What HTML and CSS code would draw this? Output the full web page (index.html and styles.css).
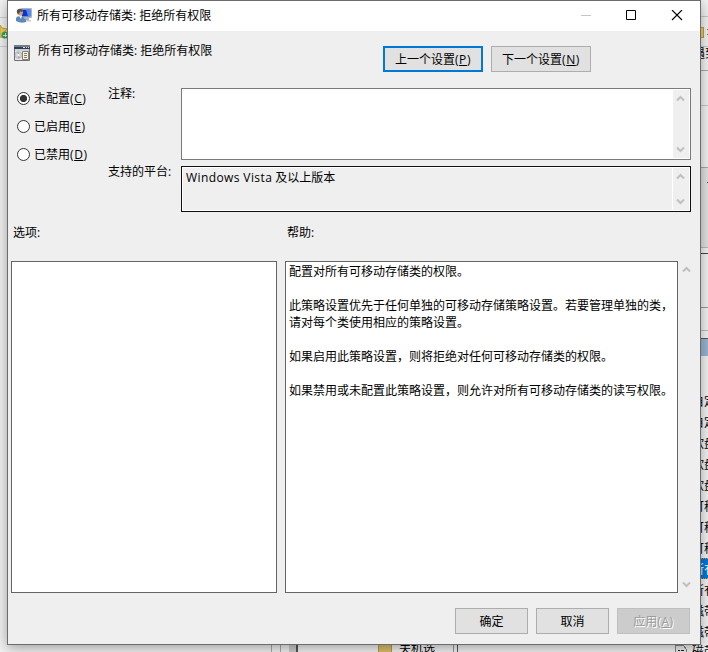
FILE: index.html
```html
<!DOCTYPE html>
<html lang="zh-CN">
<head>
<meta charset="utf-8">
<title>所有可移动存储类: 拒绝所有权限</title>
<link rel="stylesheet" href="styles.css">
</head>
<body>
<div class="desktop">
  <svg class="backdrop" width="708" height="652" viewBox="0 0 708 652" shape-rendering="crispEdges">
    <path d="M0 17.500H8M0 46.500H8" stroke="#cfcfcf"/>
    <path d="M0 25l2 3 5 1-3 4 1 5-5-1z" fill="#f0cf58" stroke="#c9a12a" shape-rendering="auto"/>
    <circle cx="5" cy="35" r="3.500" fill="#36a35a" shape-rendering="auto"/>
    <path d="M3 35h4M5 33v4" stroke="#d8f0dd"/>
    <path d="M701 16.500h7M701 46.500h7M701 105.500h7" stroke="#c6c6c6"/>
    <path d="M697.500 27.500h6v10h-6z" fill="#e2cf7c" stroke="#c99e1e"/>
    <path d="M707 29h1M707 34h1" stroke="#b06030"/>
    <path d="M701 70.500h7M701 167.500h7" stroke="#a8a8a8"/>
    <path d="M701 168h7v79h-7z" fill="#e2e2e2"/>
    <path d="M707 182.500h1M701 253.500h7" stroke="#444"/>
    <path d="M701 247.500h7M701 330.500h7" stroke="#bbb"/>
    <path d="M701 307.500h7" stroke="#999"/>
    <path d="M701 338.500h7" stroke="#555"/>
    <path d="M701 339h7v17h-7z" fill="#99b4d1"/>
    <path d="M701 558h7v21h-7z" fill="#0078d7"/>
    <path d="M701 558.500h7M701 578.500h7" stroke="#e08a3a" stroke-dasharray="1 1"/>
    <path d="M271.500 645v7M280.500 645v7" stroke="#aaa"/>
    <path d="M289 645h7v7h-7z" fill="#ccc"/>
    <path d="M297 645v7" stroke="#555" stroke-width="2"/>
    <path d="M378.500 644.500h13v9h-13z" fill="#dcbd6a" stroke="#b99743"/>
    <path d="M453.500 645v7" stroke="#8b96aa"/>
    <path d="M457.500 645v7" stroke="#555"/>
    <path d="M675.500 645.500h8l3 4v4h-11z" fill="#eee" stroke="#888"/>
    <path d="M678 650.500h2M681 650.500h3" stroke="#222"/>
  </svg>
  <span class="scrap scrap-menu">遇到</span>
  <span class="scrap scrap-tree">关机选</span>
  <span class="scrap scrap-tape">磁带</span>
  <div class="policy-list">
    <span>自定</span><span>自定</span><span>软盘</span><span>软盘</span><span>软盘</span><span>可移</span><span>可移</span><span>可移</span><span class="selected">所有</span><span>所有</span><span>磁带</span><span>磁带</span>
  </div>

  <main class="dialog">
    <header class="titlebar">
      <svg class="app-icon" width="16" height="16" viewBox="0 0 16 16">
        <path d="M5 .5h10.500v9H5z" fill="#d9dde2" stroke="#aeb5bd"/>
        <path d="M6 1.500h8.500v7H6z" fill="#0b35c8"/>
        <path d="M10 1.500h4.500v7H12z" fill="#5289ed"/>
        <path d="M9 10h4v2H9z" fill="#a9b0ba"/><path d="M8 12h7v1.500H8z" fill="#c5cad1"/>
        <circle cx="4" cy="4.500" r="3" fill="#d2a078"/>
        <path d="M1 5Q0 1 4 .8 7 1 6.500 4L4 3.500 3 6z" fill="#55504b"/>
        <path d="M0 13V10Q1 8 4 8t6 4v2Q5 16 0 13" fill="#5e89bb"/>
        <path d="M3 8l2 3 1-3" fill="#e9f0f7"/>
      </svg>
      <h1>所有可移动存储类: 拒绝所有权限</h1>
      <svg class="controls" width="104" height="12" viewBox="0 0 104 12">
        <path d="M1 5.500h10" stroke="#c6c6c6"/>
        <path d="M46.500 .5h9v9h-9z" fill="none" stroke="#000"/>
        <path d="M92 0l10 10M102 0L92 10" stroke="#000" stroke-width="1.100"/>
      </svg>
    </header>

    <section class="heading">
      <svg class="policy-icon" width="16" height="16" viewBox="0 0 16 16">
        <path d="M.5.500h15v15H.5z" fill="#ece9e4" stroke="#716f73"/>
        <path d="M0 0h16v2H0z" fill="#777b83"/><path d="M0 2h16v2H0z" fill="#29415f"/>
        <path d="M9 2h2v1H9zM12 2h1v1h-1zM14 2h1v1h-1z" fill="#dfe5e9"/>
        <path d="M1 4h14v2H1z" fill="#cfd2d4"/>
        <circle cx="4.500" cy="10" r="3.500" fill="#d7cfe0" stroke="#a8a1b2" stroke-width=".6"/>
        <path d="M4.500 10L3 7h2zM4.500 10L6 13H4z" fill="#85bc9a"/>
        <circle cx="4.500" cy="10" r="1" fill="#fff"/>
        <path d="M8.500 6.500h6v8h-6z" fill="#f7f3de" stroke="#88826f"/>
        <path d="M10 8.500h3M10 10.500h3M10 12.500h3" stroke="#817f79"/>
      </svg>
      <h2>所有可移动存储类: 拒绝所有权限</h2>
      <div class="nav-buttons">
        <button class="btn primary">上一个设置<span class="key">(<u>P</u>)</span></button>
        <button class="btn">下一个设置<span class="key">(<u>N</u>)</span></button>
      </div>
    </section>

    <section class="state">
      <div class="radios">
        <label><i class="radio checked"></i><span>未配置<span class="key">(<u>C</u>)</span></span></label>
        <label><i class="radio"></i><span>已启用<span class="key">(<u>E</u>)</span></span></label>
        <label><i class="radio"></i><span>已禁用<span class="key">(<u>D</u>)</span></span></label>
      </div>
      <div class="fields">
        <span class="field-label">注释:</span>
        <div class="box comment">
          <div class="box-text"></div>
          <div class="scroll">
            <svg width="9" height="7" viewBox="0 0 9 7"><path d="M1 5.500L4.500 2 8 5.500"/></svg>
            <svg width="9" height="7" viewBox="0 0 9 7"><path d="M1 1.500L4.500 5 8 1.500"/></svg>
          </div>
        </div>
        <span class="field-label">支持的平台:</span>
        <div class="box platform">
          <div class="box-text"><span class="latin">Windows Vista</span> 及以上版本</div>
          <div class="scroll">
            <svg width="9" height="7" viewBox="0 0 9 7"><path d="M1 5.500L4.500 2 8 5.500"/></svg>
            <svg width="9" height="7" viewBox="0 0 9 7"><path d="M1 1.500L4.500 5 8 1.500"/></svg>
          </div>
        </div>
      </div>
    </section>

    <section class="details">
      <span class="options-label">选项:</span>
      <span class="help-label">帮助:</span>
      <div class="panel"></div>
      <div class="panel help">
        <p>配置对所有可移动存储类的权限。</p>
        <p>此策略设置优先于任何单独的可移动存储策略设置。若要管理单独的类，<br>请对每个类使用相应的策略设置。</p>
        <p>如果启用此策略设置，则将拒绝对任何可移动存储类的权限。</p>
        <p>如果禁用或未配置此策略设置，则允许对所有可移动存储类的读写权限。</p>
      </div>
      <div class="scroll">
        <svg width="9" height="7" viewBox="0 0 9 7"><path d="M1 5.500L4.500 2 8 5.500"/></svg>
        <svg width="9" height="7" viewBox="0 0 9 7"><path d="M1 1.500L4.500 5 8 1.500"/></svg>
      </div>
    </section>

    <footer class="actions">
      <button class="btn">确定</button>
      <button class="btn">取消</button>
      <button class="btn" disabled>应用<span class="key">(<u>A</u>)</span></button>
    </footer>
  </main>
</div>
</body>
</html>
```

FILE: styles.css
```css
* { box-sizing: border-box; }
body {
  margin: 0;
  font: 12px/17px "Open Sans", "Noto Sans CJK SC", sans-serif;
  color: #000;
}
h1, h2, p { margin: 0; font-size: 12px; font-weight: 400; }
u { text-decoration-thickness: 1px; text-underline-offset: 1px; }
.key { letter-spacing: .6px; }
.latin { letter-spacing: .4px; }

.desktop {
  position: relative;
  width: 708px;
  height: 652px;
  overflow: hidden;
  background: #f2f2f2;
}
.backdrop { position: absolute; inset: 0; }
.scrap { position: absolute; white-space: nowrap; }
.scrap-menu { left: 693px; top: 45px; }
.scrap-tree { left: 399px; top: 640px; }
.scrap-tape { left: 692px; top: 643px; }
.policy-list {
  position: absolute;
  left: 692px;
  top: 391px;
  display: flex;
  flex-direction: column;
  white-space: nowrap;
  line-height: 21px;
}
.policy-list .selected { color: #fff; }

.dialog {
  position: absolute;
  left: 7px;
  top: 0;
  width: 694px;
  height: 645px;
  border: 1px solid #6c6c6c;
  background: #efefef;
  box-shadow: 0 3px 12px rgba(0, 0, 0, .35);
  display: flex;
  flex-direction: column;
}
.titlebar {
  height: 30px;
  flex: none;
  display: flex;
  align-items: center;
  gap: 5px;
  padding: 0 16px 0 8px;
  background: #fff;
}
.titlebar h1 { margin-top: -1px; }
.controls { margin-left: auto; }

.heading {
  display: flex;
  flex: none;
  height: 57px;
  padding: 14px 0 0 6px;
}
.heading h2 { margin: -3px 0 0 8px; width: 345px; }
.nav-buttons { display: flex; gap: 8px; margin-top: 1px; }
.nav-buttons .btn { width: 100px; }
.btn {
  width: 73px;
  height: 26px;
  padding: 0;
  border: 1px solid #adadad;
  background: #e1e1e1;
  color: #000;
  font: inherit;
}
.btn.primary { border: 2px solid #0078d7; }
.btn:disabled {
  border-color: #bfbfbf;
  background: #ccc;
  color: #9b9b9b;
  text-shadow: 1px 1px #fff;
}

.state { display: flex; flex: none; height: 124px; padding-left: 9px; }
.radios { width: 91px; padding-top: 2px; }
.radios label { display: flex; align-items: center; gap: 4px; height: 17px; margin-bottom: 11px; }
.radio {
  width: 13px;
  height: 13px;
  border: 1px solid #333;
  border-radius: 50%;
  background: #fff;
}
.radio.checked { background: radial-gradient(circle, #333 3.2px, #fff 4px); }
.fields {
  display: grid;
  grid-template-columns: 73px 510px;
  grid-template-rows: 72px 46px;
  row-gap: 6px;
}
.field-label { margin-top: -3px; }
.box { display: flex; padding: 1px; border: 1px solid #7a7a7a; background: #fff; }
.box-text { flex: 1; padding: 1px 3px; }
.platform { border-color: #111; }
.platform .box-text { background: #efefef; margin-right: 1px; }
.scroll {
  width: 16px;
  display: flex;
  flex-direction: column;
  justify-content: space-between;
  align-items: center;
  padding: 5px 1px 5px 0;
  background: #efefef;
}
.scroll svg { margin-right: 1px; }
.scroll path { fill: none; stroke: #bfbfbf; stroke-width: 2; }

.details {
  display: grid;
  flex: none;
  grid-template-columns: 266px 393px 16px;
  grid-template-rows: 49px 332px;
  column-gap: 8px;
  padding-left: 3px;
}
.options-label { padding: 12px 0 0 2px; }
.help-label { grid-column: 2 / 4; padding: 12px 0 0 2px; }
.panel { border: 1px solid #646464; background: #fff; }
.help { padding: 1px 3px; white-space: nowrap; }
.help p { margin-bottom: 17px; }
.details .scroll { margin-left: -7px; }
.actions {
  display: flex;
  justify-content: flex-end;
  gap: 8px;
  padding: 15px 10px 0 0;
}
```
